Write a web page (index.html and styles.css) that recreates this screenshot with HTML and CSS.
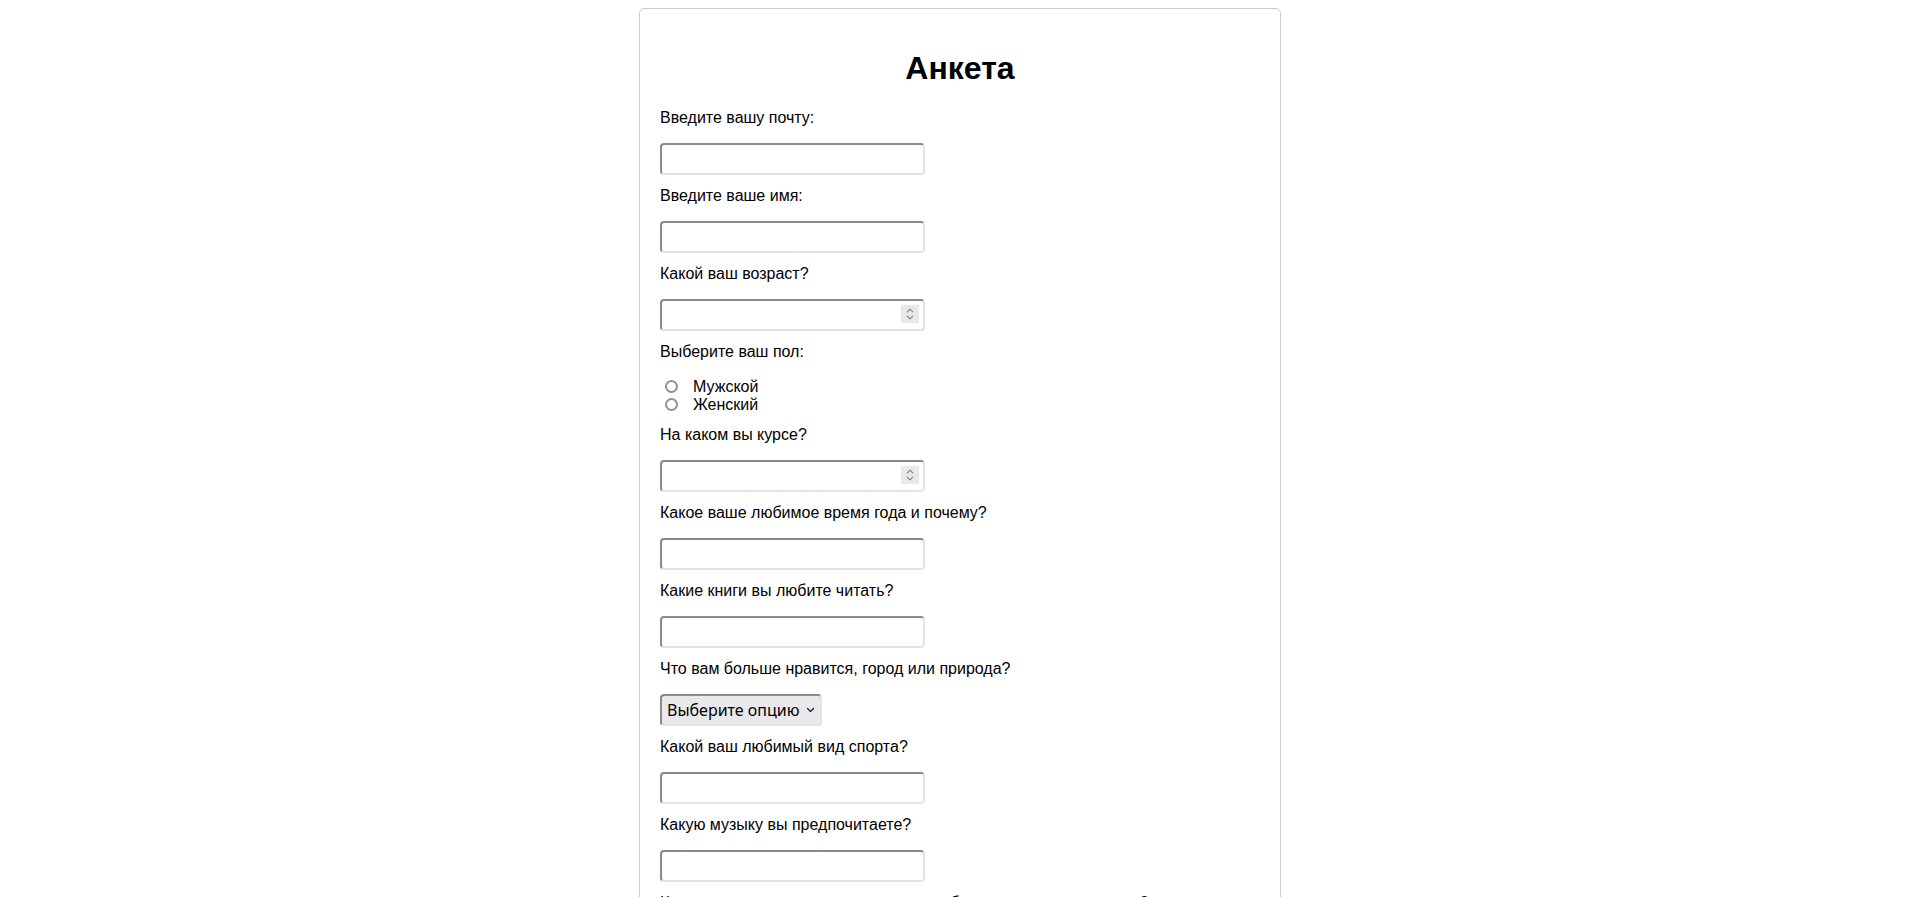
FILE: index.html
```html
<!DOCTYPE html>
<html lang="ru">
<head>
<meta charset="utf-8">
<title>Анкета</title>
<link rel="stylesheet" href="styles.css">
</head>
<body>
<div class="container">
  <h1 class="title">Анкета</h1>
  <form class="form">
    <label class="question" for="email">Введите вашу почту:</label>
    <input class="field" type="email" id="email">

    <label class="question" for="name">Введите ваше имя:</label>
    <input class="field" type="text" id="name">

    <label class="question" for="age">Какой ваш возраст?</label>
    <div class="number-wrap">
      <input class="field field-number" type="number" id="age">
      <svg class="spinner" width="18" height="18" viewBox="0 0 18 18" aria-hidden="true">
        <rect x="0" y="0" width="18" height="18" fill="#e9e9ed"/>
        <path d="M6.3 6.8 L9 4.2 L11.7 6.8" fill="none" stroke="#7b7b85" stroke-width="1.1" stroke-linecap="round" stroke-linejoin="round"/>
        <path d="M6.3 11.2 L9 13.8 L11.7 11.2" fill="none" stroke="#7b7b85" stroke-width="1.1" stroke-linecap="round" stroke-linejoin="round"/>
      </svg>
    </div>

    <div class="question">Выберите ваш пол:</div>
    <div class="radios">
      <div class="radio-row"><input class="radio" type="radio" id="male" name="gender"><label class="radio-label" for="male">Мужской</label></div>
      <div class="radio-row"><input class="radio" type="radio" id="female" name="gender"><label class="radio-label" for="female">Женский</label></div>
    </div>

    <label class="question" for="course">На каком вы курсе?</label>
    <div class="number-wrap">
      <input class="field field-number" type="number" id="course">
      <svg class="spinner" width="18" height="18" viewBox="0 0 18 18" aria-hidden="true">
        <rect x="0" y="0" width="18" height="18" fill="#e9e9ed"/>
        <path d="M6.3 6.8 L9 4.2 L11.7 6.8" fill="none" stroke="#7b7b85" stroke-width="1.1" stroke-linecap="round" stroke-linejoin="round"/>
        <path d="M6.3 11.2 L9 13.8 L11.7 11.2" fill="none" stroke="#7b7b85" stroke-width="1.1" stroke-linecap="round" stroke-linejoin="round"/>
      </svg>
    </div>

    <label class="question" for="season">Какое ваше любимое время года и почему?</label>
    <input class="field" type="text" id="season">

    <label class="question" for="books">Какие книги вы любите читать?</label>
    <input class="field" type="text" id="books">

    <label class="question" for="place">Что вам больше нравится, город или природа?</label>
    <div class="select-wrap">
      <select class="select" id="place">
        <option>Выберите опцию</option>
        <option>Город</option>
        <option>Природа</option>
      </select>
      <svg class="chevron" width="9" height="6" viewBox="0 0 9 6" aria-hidden="true">
        <path d="M1.5 1.5 L4.5 4.5 L7.5 1.5" fill="none" stroke="#1c1b22" stroke-width="1.2" stroke-linecap="round" stroke-linejoin="round"/>
      </svg>
    </div>

    <label class="question" for="sport">Какой ваш любимый вид спорта?</label>
    <input class="field" type="text" id="sport">

    <label class="question" for="music">Какую музыку вы предпочитаете?</label>
    <input class="field" type="text" id="music">

    <label class="question" for="study">Как вы относитесь к дистанционному обучению в университетах?</label>
    <input class="field" type="text" id="study">

    <button class="submit" type="submit">Отправить</button>
  </form>
</div>
</body>
</html>
```

FILE: styles.css
```css
body {
  margin: 8px;
  background: #ffffff;
  color: #000000;
  font-family: "Liberation Sans", Arial, sans-serif;
}

.container {
  width: 600px;
  margin: 0 auto;
  padding: 20px;
  border: 1px solid #cccccc;
  border-radius: 5px;
}

.title {
  font-size: 32px;
  font-weight: bold;
  text-align: center;
  margin: 21.44px 0;
  line-height: normal;
}

.form {
  margin: 0;
}

.question {
  display: block;
  font-size: 16px;
  line-height: normal;
  margin: 0 0 16px;
}

.field {
  display: block;
  box-sizing: border-box;
  width: 265px;
  height: 32px;
  margin: 0 0 12px;
  padding: 1px 6px;
  border-style: solid;
  border-width: 2px;
  border-color: #8a8a8a #e3e3e3 #e3e3e3 #8a8a8a;
  border-radius: 4px;
  font-family: "Liberation Sans", Arial, sans-serif;
  font-size: 13.33px;
  background: #ffffff;
  outline: none;
}

.field-number {
  -moz-appearance: textfield;
  appearance: textfield;
}

.field-number::-webkit-inner-spin-button,
.field-number::-webkit-outer-spin-button {
  -webkit-appearance: none;
  margin: 0;
}

.number-wrap {
  position: relative;
  width: 265px;
}

.spinner {
  position: absolute;
  top: 6px;
  right: 6px;
  display: block;
}

.radios {
  margin: 0 0 12px;
  padding-top: 1px;
}

.radio-row {
  display: flex;
  align-items: center;
  height: 18px;
}

.radio {
  -webkit-appearance: none;
  appearance: none;
  box-sizing: border-box;
  width: 13px;
  height: 13px;
  margin: 0 0 0 5px;
  border: 2px solid #8f8f9d;
  border-radius: 50%;
  background: #ffffff;
}

.radio-label {
  margin-left: 15px;
  font-size: 16px;
  line-height: 18px;
}

.select-wrap {
  position: relative;
  width: 162px;
  margin: 0 0 12px;
}

.select {
  -webkit-appearance: none;
  appearance: none;
  display: block;
  box-sizing: border-box;
  width: 162px;
  height: 32px;
  margin: 0;
  padding: 0 20px 0 5px;
  border-style: solid;
  border-width: 2px;
  border-color: #8a8a8a #e3e3e3 #e3e3e3 #8a8a8a;
  border-radius: 4px;
  background-color: #e9e9ed;
  color: #000000;
  font-family: "Noto Sans", sans-serif;
  font-size: 16px;
}

.chevron {
  position: absolute;
  top: 13px;
  right: 7px;
  display: block;
  pointer-events: none;
}

.submit {
  font-family: "Liberation Sans", Arial, sans-serif;
  font-size: 16px;
  padding: 6px 14px;
}
```
